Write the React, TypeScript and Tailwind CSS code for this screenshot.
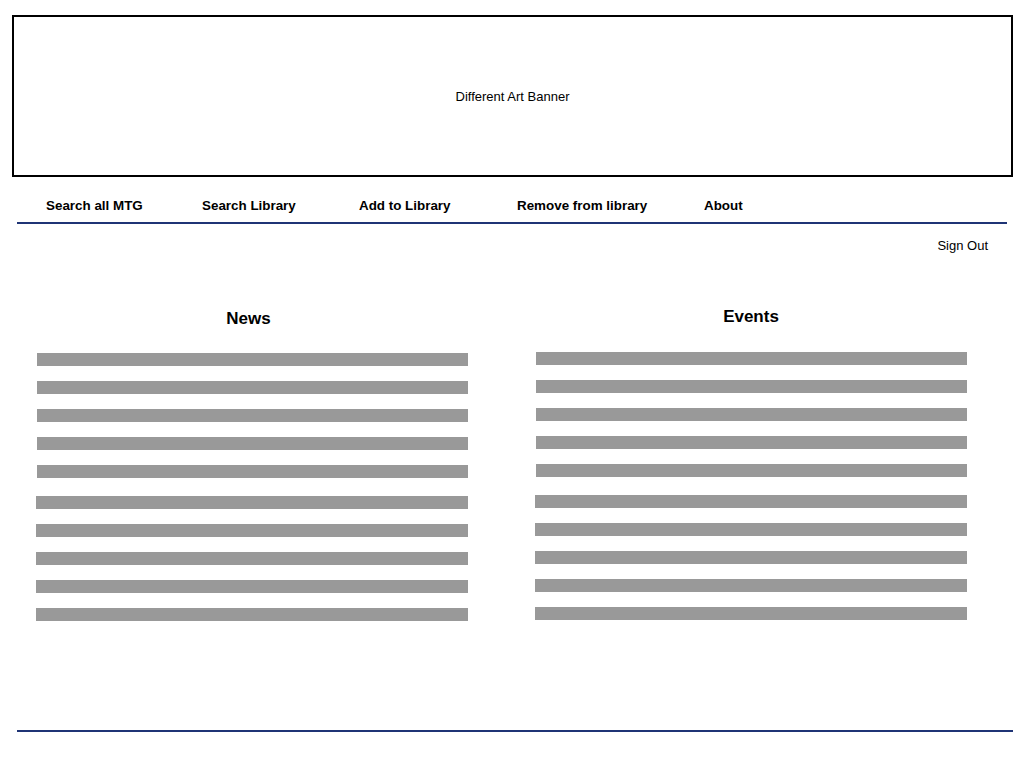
import React from "react";

const navItems = [
  { label: "Search all MTG", w: "w-[156px]" },
  { label: "Search Library", w: "w-[157px]" },
  { label: "Add to Library", w: "w-[158px]" },
  { label: "Remove from library", w: "w-[187px]" },
  { label: "About", w: "w-[80px]" },
];

function Bars({ offset }: { offset: string }) {
  return (
    <div className="flex flex-col">
      <div className="flex flex-col gap-[15px] ml-px">
        {[0, 1, 2, 3, 4].map((i) => (
          <div key={i} className="h-[13px] w-[431px] bg-[#999999]" />
        ))}
      </div>
      <div className={`flex flex-col gap-[15px] ${offset}`}>
        {[0, 1, 2, 3, 4].map((i) => (
          <div key={i} className="h-[13px] w-[432px] bg-[#999999]" />
        ))}
      </div>
    </div>
  );
}

export default function App() {
  return (
    <div className="w-[1024px] h-[768px] bg-white text-black font-['Liberation_Sans',Arial,sans-serif] overflow-hidden">
      <div className="pt-[15px] pl-[12px]">
        <div className="w-[1001px] h-[162px] border-2 border-black pt-[2px] flex items-center justify-center text-[13px] leading-[16px]">
          Different Art Banner
        </div>
      </div>

      <nav className="mt-[19px] pl-[46px] flex h-[20px] items-center text-[13.4px] font-bold leading-[20px]">
        {navItems.map((n) => (
          <div key={n.label} className={n.w}>
            {n.label}
          </div>
        ))}
      </nav>
      <div className="mt-[6px] ml-[17px] w-[990px] h-[2px] bg-[#1f3475]" />

      <div className="mt-[14px] w-[988px] text-right text-[13px] leading-[16px]">Sign Out</div>

      <div className="flex">
        <section className="ml-[36px] w-[432px] pt-[55px]">
          <h2 className="h-[20px] leading-[20px] text-[17px] font-bold text-center pr-[7px]">News</h2>
          <div className="mt-[24px]">
            <Bars offset="mt-[18px]" />
          </div>
        </section>
        <section className="ml-[67px] w-[432px] pt-[53px]">
          <h2 className="h-[20px] leading-[20px] text-[17px] font-bold text-center">Events</h2>
          <div className="mt-[25px]">
            <Bars offset="mt-[18px]" />
          </div>
        </section>
      </div>

      <div className="mt-[109px] ml-[17px] w-[996px] h-[2px] bg-[#1f3475]" />
    </div>
  );
}
